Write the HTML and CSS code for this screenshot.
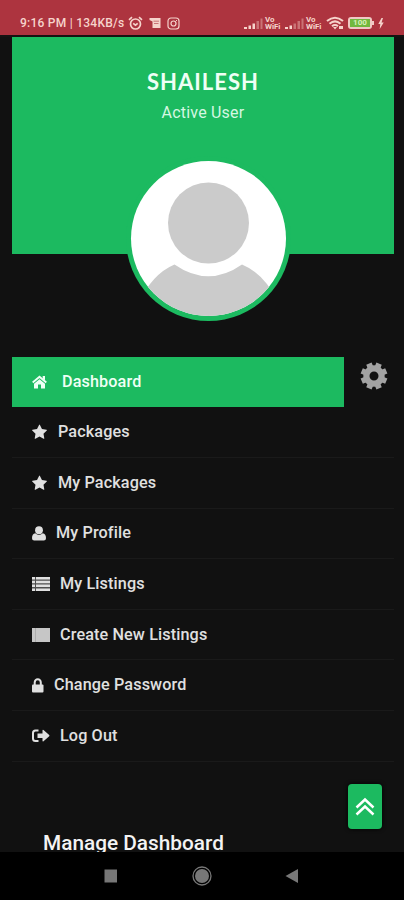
FILE: index.html
```html
<!DOCTYPE html>
<html lang="en">
<head>
<meta charset="utf-8">
<title>Dashboard</title>
<link rel="stylesheet" href="styles.css">
</head>
<body>
<div class="phone">
  <header class="status">
    <span class="clock">9:16 PM | 134KB/s</span>
    <svg class="alarm" width="15" height="15" viewBox="0 0 15 15" fill="none" stroke="currentColor" stroke-width="1.7"><circle cx="7.5" cy="8" r="5"/><path d="M1 3.8 4 1.2M14 3.8 11 1.2M5.2 7.3l2.3 1.8 2.2-1.8"/></svg>
    <svg class="note" width="12" height="12" viewBox="0 0 12 12"><path fill="currentColor" d="M.5 1h11v10h-8V4.500L.5 3z"/><path d="M4.500 4.200H10M5 6.500h4.500" stroke="#ad343f" stroke-width=".6" fill="none"/></svg>
    <svg class="insta" width="13" height="13" viewBox="0 0 13 13" fill="none" stroke="currentColor" stroke-width="1.200"><rect x="1" y="1" width="11" height="11" rx="3"/><circle cx="6.500" cy="6.500" r="2.500"/><path d="M9 3.500h1"/></svg>
    <span class="spacer"></span>
    <svg class="signal" width="20" height="13" viewBox="0 0 20 13" fill="currentColor"><path d="M0 10h3v2H0zM4.500 8.500h2.500V12H4.500zM8.500 6.500H11V12H8.500z"/><path opacity=".4" d="M12.500 4H15v8h-2.500zM16.500 1.500h2V12h-2z"/></svg>
    <span class="vo">Vo<br>WiFi</span>
    <svg class="signal" width="20" height="13" viewBox="0 0 20 13" fill="currentColor"><path d="M0 10h3v2H0zM4.500 8.500h2.500V12H4.500z"/><path opacity=".4" d="M8.500 6.500H11V12H8.500zM12.500 4H15v8h-2.500zM16.500 1.500h2V12h-2z"/></svg>
    <span class="vo">Vo<br>WiFi</span>
    <svg class="wifi" width="18" height="14" viewBox="0 0 18 14" fill="none" stroke="currentColor" stroke-width="2.100"><path d="M1 5Q9-1.500 17 5M3.500 7.700q5.500-4.500 11 0M6 10.200q3-2.400 6 0"/><path fill="currentColor" stroke="none" d="M7 11h4l-2 2.500zM13 10h4v3h-4z"/></svg>
    <span class="battery"><span class="cell">100</span></span>
    <svg class="bolt" width="6" height="11" viewBox="0 0 6 11"><path fill="currentColor" d="M3.500 0 .3 6h2L1.700 11 5.700 4.600H3.500L5 0z"/></svg>
  </header>

  <main class="page">
    <section class="profile">
      <h1>SHAILESH</h1>
      <p>Active User</p>
      <svg class="avatar" viewBox="0 0 165 165">
        <clipPath id="face"><circle cx="82.500" cy="82.500" r="77.500"/></clipPath>
        <circle cx="82.500" cy="82.500" r="82.500" fill="#1cba60"/>
        <circle cx="82.500" cy="82.500" r="77.500" fill="#fff"/>
        <path clip-path="url(#face)" fill="#cbcbcb" d="M12 148Q26 118 48.500 108.500Q82.500 132 116 108.500Q139 118 153 148V165H12z"/>
        <circle cx="82.500" cy="67" r="40.500" fill="#cbcbcb"/>
      </svg>
    </section>

    <div class="menu-wrap">
      <nav class="menu">
        <a class="item active"><svg width="15" height="14" viewBox="0 0 15 14" fill="currentColor"><path d="M7.500 4.200 13 8.700V13.500H9V9.500H6v4H2V8.700z"/><path d="M.7 7.500 7.500 1.800l6.800 5.700" fill="none" stroke="currentColor" stroke-width="1.900"/><path d="M10.700 1h2.300v4.500l-2.300-2z"/></svg><span class="label">Dashboard</span></a>
        <a class="item"><svg width="15" height="16" viewBox="0 60 1664 1600" fill="currentColor"><path d="M1664 647q0 22-26 48l-363 354 86 500q1 7 1 20 0 21-10.500 35.500t-30.500 14.500q-19 0-40-12l-449-236-449 236q-22 12-40 12-21 0-31.500-14.500t-10.500-35.500q0-6 2-20l86-500-364-354q-25-27-25-48 0-37 56-46l502-73 225-455q19-41 49-41t49 41l225 455 502 73q56 9 56 46z"/></svg><span class="label">Packages</span></a>
        <a class="item"><svg width="15" height="16" viewBox="0 60 1664 1600" fill="currentColor"><path d="M1664 647q0 22-26 48l-363 354 86 500q1 7 1 20 0 21-10.500 35.500t-30.500 14.500q-19 0-40-12l-449-236-449 236q-22 12-40 12-21 0-31.500-14.500t-10.500-35.500q0-6 2-20l86-500-364-354q-25-27-25-48 0-37 56-46l502-73 225-455q19-41 49-41t49 41l225 455 502 73q56 9 56 46z"/></svg><span class="label">My Packages</span></a>
        <a class="item"><svg width="14" height="15" viewBox="0 0 14 15" fill="currentColor"><circle cx="7" cy="4.200" r="3.900"/><path d="M3.300 7.200Q7 10.300 10.700 7.200 14 7.800 14 12.200 14 14.500 11.800 14.500H2.200Q0 14.500 0 12.200 0 7.800 3.300 7.200z"/></svg><span class="label">My Profile</span></a>
        <a class="item"><svg width="18" height="14" viewBox="0 0 18 14" fill="currentColor"><path opacity=".3" d="M0 0h18v14H0z"/><path d="M0 0h3v2.500H0zM4 0h14v2.500H4zM0 3.800h3v2.500H0zM4 3.800h14v2.500H4zM0 7.600h3v2.500H0zM4 7.600h14v2.500H4zM0 11.400h3v2.500H0zM4 11.400h14v2.500H4z"/></svg><span class="label">My Listings</span></a>
        <a class="item"><svg width="18" height="14" viewBox="0 0 18 14" fill="currentColor"><path opacity=".75" d="M0 0h18v14H0z"/><path d="M0 0h3v14H0zM4 0h14v14H4z" opacity=".5"/></svg><span class="label">Create New Listings</span></a>
        <a class="item"><svg width="12" height="15" viewBox="0 0 12 15" fill="currentColor"><rect x="0" y="6.500" width="11.500" height="8" rx="1"/><path d="M2.700 7V4.500a3.050 3.200 0 0 1 6.100 0V7" fill="none" stroke="currentColor" stroke-width="2"/></svg><span class="label">Change Password</span></a>
        <a class="item"><svg width="18" height="14" viewBox="0 0 18 14" fill="currentColor"><path d="M6.500 1.500H3.500Q1 1.500 1 4v5.500Q1 12 3.500 12h3" fill="none" stroke="currentColor" stroke-width="2"/><path d="M5.500 4.500h5V1.300q.2-.8 1-.2l5.700 5q.5.600 0 1.200l-5.700 5q-.8.600-1-.2V9h-5z"/></svg><span class="label">Log Out</span></a>
      </nav>
      <svg class="gear" width="28" height="28" viewBox="-14 -14 28 28" fill="none" stroke="#a3a3a3">
        <circle r="7.600" stroke-width="6.200"/>
        <g stroke-width="5.800"><path d="M0-8V-13.300M0 8V13.300" transform="rotate(22.500)"/><path d="M0-8V-13.300M0 8V13.300" transform="rotate(67.500)"/><path d="M0-8V-13.300M0 8V13.300" transform="rotate(112.500)"/><path d="M0-8V-13.300M0 8V13.300" transform="rotate(157.500)"/></g>
      </svg>
    </div>
    <h2>Manage Dashboard</h2>
  </main>

  <footer class="nav">
    <svg width="14" height="14" viewBox="0 0 14 14"><path fill="#777" d="M.5.500h12.500v13H.5z"/></svg>
    <svg width="20" height="20" viewBox="0 0 20 20"><circle cx="10" cy="10" r="9" fill="none" stroke="#777" stroke-width="1.300"/><circle cx="10" cy="10" r="7" fill="#777"/></svg>
    <svg width="14" height="16" viewBox="0 0 14 16"><path fill="#777" d="M.5 8 13 1v14z"/></svg>
  </footer>
  <a class="top"><svg width="20" height="20" viewBox="0 0 20 20" fill="none" stroke="#fff" stroke-width="2.500"><path d="m1.500 10.500 8.500-8 8.500 8M1.500 17.500l8.500-8 8.500 8"/></svg></a>
</div>
</body>
</html>
```
FILE: styles.css
```css
* { box-sizing: border-box; }
body { margin: 0; background: #111; font-family: Roboto, sans-serif; }
h1, h2, p { margin: 0; font-weight: 500; }
svg { display: block; flex: none; }
.phone { position: relative; width: 404px; height: 900px; overflow: hidden; display: flex; flex-direction: column; }
.status { height: 37px; flex: none; background: #ad343f; border-bottom: 2px solid #161312; color: #f6d3cb; display: flex; align-items: center; padding: 11px 20px 0; }
.clock { font-size: 12px; font-weight: 500; line-height: 14px; letter-spacing: .25px; width: 108px; white-space: nowrap; }
.alarm { margin-right: 6px; }
.note { margin-right: 6px; }
.spacer { flex: 1; }
.signal { margin-right: 1px; }
.vo { font-size: 8px; line-height: 7.500px; font-weight: 700; width: 20px; letter-spacing: -.1px; }
.wifi { margin-right: 4px; }
.battery { position: relative; width: 24px; height: 12px; border: 2px solid #f0c9c4; border-radius: 3px; margin-right: 6px; }
.battery::after { content: ""; position: absolute; left: 22px; top: 2px; width: 2px; height: 4px; background: #f0c9c4; }
.cell { display: block; height: 8px; background: #72b83e; color: #d8f0b8; font-size: 8px; line-height: 8px; font-weight: 700; text-align: center; }
.page { height: 815px; overflow: hidden; flex: none; padding: 0 10px 0 12px; }
.profile { height: 217px; background: #1cba60; color: #effff5; display: flex; flex-direction: column; align-items: center; padding: 32px 0 0; }
h1 { font-family: Lato, sans-serif; font-size: 22px; line-height: 26px; font-weight: 700; letter-spacing: 1px; }
.profile p { font-size: 16px; line-height: 20px; font-weight: 400; margin-top: 8px; color: #d5f7e2; letter-spacing: .2px; }
.avatar { width: 165px; height: 165px; margin: 33px 0 0 10px; }
.menu-wrap { display: flex; margin-top: 103px; height: 404px; }
.menu { width: 332px; flex: none; }
.item { height: 50.600px; width: 382px; border-bottom: 1px solid #1a1a1a; display: flex; align-items: center; padding-left: 20px; color: #e0e0e0; }
.item.active { width: 332px; height: 49.500px; margin-bottom: 1px; background: #1cba60; border: 0; color: #effff5; }
.label { font-size: 16.200px; line-height: 20px; font-weight: 500; letter-spacing: .12px; margin-left: 10px; white-space: nowrap; }
.active .label { margin-left: 15px; }
.item:nth-child(2) .label, .item:nth-child(3) .label { margin-left: 11px; }
.gear { margin: 5px 0 0 16px; }
h2 { color: #f3f3f3; font-size: 20.800px; line-height: 24px; margin: 70px 0 0 31px; white-space: nowrap; }
.nav { height: 48px; background: #000; display: flex; align-items: center; padding: 0 105px 0 104px; justify-content: space-between; }
.top { position: absolute; left: 348px; top: 784px; width: 34px; height: 45px; border-radius: 4px; background: #1cba60; box-shadow: 0 0 4px #000; display: flex; align-items: center; justify-content: center; }
```
